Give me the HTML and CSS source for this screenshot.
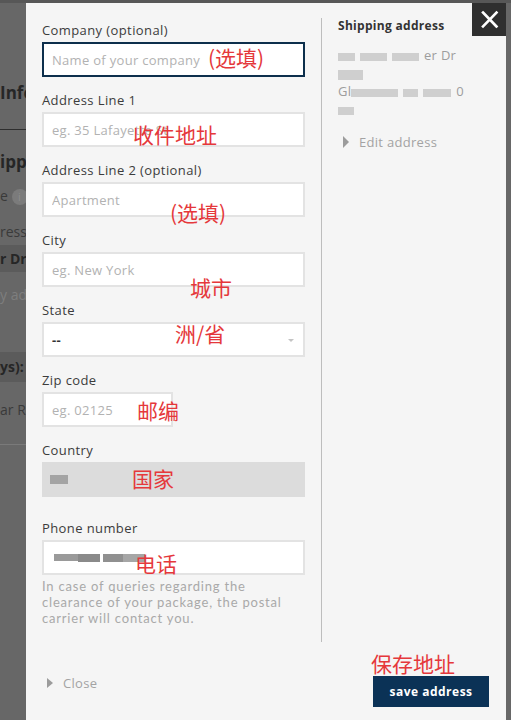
FILE: index.html
```html
<!DOCTYPE html>
<html lang="en">

<head>
  <meta charset="UTF-8">
  <meta name="viewport" content="width=device-width, initial-scale=1.0">
  <title>Edit shipping address</title>
  <link rel="stylesheet" href="styles.css">
</head>

<body>
  <!-- page behind the dialog -->
  <div class="page">
    <div class="page-top"></div>
    <div class="page-side">
      <div class="ps-title">Info</div>
      <div class="ps-rule"></div>
      <div class="ps-head">ipp</div>
      <div class="ps-note">e <span class="ps-info">i</span></div>
      <div class="ps-text">ress</div>
      <div class="ps-band">r Dr</div>
      <div class="ps-muted">y ad</div>
      <div class="ps-band ps-band-tall">ys):</div>
      <div class="ps-text ps-text-far">ar R.</div>
      <div class="ps-rule ps-rule-light"></div>
    </div>
  </div>

  <div class="modal">
    <button class="close-btn" aria-label="Close">
      <svg width="34" height="33" viewBox="0 0 34 33">
        <path d="M11 9.5 L24.5 23.5 M24.5 9.5 L11 23.5" stroke="#fff" stroke-width="2.6" stroke-linecap="square" />
      </svg>
    </button>

    <div class="modal-body">
      <form class="form-col">
        <div class="field">
          <label for="company">Company (optional)</label>
          <input id="company" class="input input-active" type="text" placeholder="Name of your company">
        </div>
        <div class="field">
          <label for="line1">Address Line 1</label>
          <input id="line1" class="input" type="text" placeholder="eg. 35 Lafayette St">
        </div>
        <div class="field">
          <label for="line2">Address Line 2 (optional)</label>
          <input id="line2" class="input" type="text" placeholder="Apartment">
        </div>
        <div class="field">
          <label for="city">City</label>
          <input id="city" class="input" type="text" placeholder="eg. New York">
        </div>
        <div class="field">
          <label for="state">State</label>
          <div class="select-wrap">
            <select id="state" class="select">
              <option>--</option>
            </select>
          </div>
        </div>
        <div class="field">
          <label for="zip">Zip code</label>
          <input id="zip" class="input input-zip" type="text" placeholder="eg. 02125">
        </div>
        <div class="field field-country">
          <label>Country</label>
          <div class="static-box"><span class="bit bit-country"></span></div>
        </div>
        <div class="field field-last">
          <label for="phone">Phone number</label>
          <div class="input phone-box">
            <span class="bit bit-phone-a"></span><span class="bit bit-phone-b"></span><span class="bit bit-phone-c"></span><span class="bit bit-phone-d"></span>
          </div>
          <p class="help">In case of queries regarding the<br>clearance of your package, the postal<br>carrier will contact you.</p>
        </div>
      </form>

      <div class="summary-col">
        <h3>Shipping address</h3>
        <div class="address">
          <div><span class="bit w17"></span><span class="bit w27"></span><span class="bit w27"></span>er Dr</div>
          <div><span class="bit w25 bit-tall"></span></div>
          <div>Gl<span class="bit w47"></span><span class="bit w15"></span><span class="bit w28"></span>0</div>
          <div><span class="bit w16"></span></div>
        </div>
        <a class="toggle edit-link">Edit address</a>
      </div>
    </div>

    <div class="modal-foot">
      <a class="toggle close-link">Close</a>
      <button class="save-btn">save address</button>
    </div>
  </div>

  <!-- red notes drawn over the screenshot -->
  <div class="notes">
    <span class="note note-company">(选填)</span>
    <span class="note note-line1">收件地址</span>
    <span class="note note-line2">(选填)</span>
    <span class="note note-city">城市</span>
    <span class="note note-state">洲/省</span>
    <span class="note note-zip">邮编</span>
    <span class="note note-country">国家</span>
    <span class="note note-phone">电话</span>
    <span class="note note-save">保存地址</span>
  </div>
</body>

</html>
```

FILE: styles.css
```css
body {
  margin: 0;
  width: 511px;
  height: 720px;
  overflow: hidden;
  position: relative;
  background: #676767;
  font-family: "Open Sans", "Liberation Sans", sans-serif;
}

/* background page, dimmed */
.page-top {
  height: 3px;
  background: #575757;
}

.page-side {
  width: 40px;
  overflow: hidden;
  white-space: nowrap;
  color: #262626;
  font-size: 14px;
}

.ps-title {
  margin-top: 78px;
  line-height: 24px;
  font-size: 17px;
  font-weight: bold;
}

.ps-rule {
  margin-top: 24px;
  height: 1px;
  background: #2e2e2e;
}

.ps-rule-light {
  background: #7a7a7a;
}

.ps-head {
  margin-top: 20px;
  line-height: 24px;
  font-size: 17px;
  font-weight: bold;
}

.ps-note {
  margin-top: 12px;
  line-height: 20px;
  color: #3a3a3a;
}

.ps-info {
  display: inline-block;
  width: 16px;
  height: 16px;
  border-radius: 50%;
  background: #7b7b7b;
  color: #8d8d8d;
  font-size: 11px;
  line-height: 16px;
  text-align: center;
  vertical-align: middle;
}

.ps-text {
  margin-top: 16px;
  line-height: 20px;
  color: #3a3a3a;
}

.ps-text-far {
  margin-top: 18px;
}

.ps-band {
  margin-top: 3px;
  height: 27px;
  line-height: 27px;
  background: #5b5b5b;
  font-weight: bold;
}

.ps-band-tall {
  margin-top: 47px;
  height: 30px;
  line-height: 30px;
}

.ps-muted {
  margin-top: 13px;
  line-height: 20px;
  color: #7e7e7e;
}

/* dialog */
.modal {
  position: absolute;
  left: 26px;
  top: 3px;
  width: 480px;
  height: 717px;
  background: #f5f5f5;
}

.close-btn {
  position: absolute;
  top: 0;
  right: 0;
  width: 34px;
  height: 33px;
  padding: 0;
  border: none;
  background: #2f2f2f;
}

.close-btn svg {
  display: block;
}

.modal-body {
  display: flex;
  padding-top: 15px;
}

.form-col {
  width: 263px;
  margin: 0;
  padding: 4px 16px 16px 16px;
}

.field {
  margin-bottom: 15px;
}

.field-country {
  margin-bottom: 23px;
}

.field-last {
  margin-bottom: 0;
}

label {
  display: block;
  font-size: 13px;
  line-height: 16px;
  letter-spacing: 0.4px;
  margin-bottom: 4px;
  color: #3c3c3c;
}

.input,
.select {
  display: block;
  box-sizing: border-box;
  width: 100%;
  height: 35px;
  margin: 0;
  padding: 0 8px;
  border: 2px solid #e3e3e3;
  border-radius: 0;
  background: #fff;
  font-family: inherit;
  font-size: 13px;
  letter-spacing: 0.3px;
  color: #333;
  outline: none;
}

.input::placeholder {
  color: #b2b2b2;
}

.input-active {
  border-color: #0d2f4c;
}

.input-zip {
  width: 131px;
}

.select-wrap {
  position: relative;
}

.select {
  appearance: none;
  -webkit-appearance: none;
  font-weight: bold;
}

.select-wrap::after {
  content: "";
  position: absolute;
  right: 11px;
  top: 17px;
  border-left: 3px solid transparent;
  border-right: 3px solid transparent;
  border-top: 3px solid #c4c4c4;
}

.static-box {
  height: 35px;
  background: #dcdcdc;
  display: flex;
  align-items: center;
  padding-left: 8px;
}

.phone-box {
  display: flex;
  align-items: center;
  padding-left: 10px;
}

.help {
  margin: 3px 0 0;
  font-family: Lato, "Open Sans", sans-serif;
  font-size: 13px;
  line-height: 16px;
  letter-spacing: 0.8px;
  color: #a9a9a9;
}

/* blurred personal details */
.bit {
  display: inline-block;
  height: 8px;
  margin-right: 5px;
  background: #cfcfcf;
  filter: blur(0.7px);
  vertical-align: middle;
}

.bit-tall {
  height: 10px;
}

.w15 { width: 15px; }
.w16 { width: 16px; }
.w17 { width: 17px; }
.w25 { width: 25px; }
.w27 { width: 27px; }
.w28 { width: 28px; }
.w47 { width: 47px; }

.bit-country {
  width: 18px;
  height: 9px;
  background: #a4a4a4;
}

.bit-phone-a {
  width: 24px;
  height: 7px;
  margin-right: 0;
  background: #9a9a9a;
}

.bit-phone-b {
  width: 22px;
  height: 8px;
  margin-right: 3px;
  background: #8a8a8a;
}

.bit-phone-c {
  width: 20px;
  height: 8px;
  margin-right: 0;
  background: #909090;
}

.bit-phone-d {
  width: 22px;
  height: 8px;
  margin-right: 0;
  background: #a6a6a6;
}

.summary-col {
  flex: 1;
  border-left: 1px solid #bdbdbd;
  padding-left: 16px;
}

.summary-col h3 {
  margin: 0;
  font-size: 12px;
  line-height: 16px;
  letter-spacing: 0.3px;
  color: #333;
}

.address {
  margin-top: 12px;
  font-size: 13px;
  line-height: 18px;
  letter-spacing: 0.3px;
  color: #9d9d9d;
}

.toggle {
  display: flex;
  align-items: center;
  font-size: 13px;
  letter-spacing: 0.3px;
  color: #a3a3a3;
}

.toggle::before {
  content: "";
  border-left: 6px solid #9c9c9c;
  border-top: 6px solid transparent;
  border-bottom: 6px solid transparent;
  margin-right: 10px;
}

.edit-link {
  margin-top: 14px;
  line-height: 20px;
  padding-left: 5px;
}

.modal-foot {
  display: flex;
  justify-content: space-between;
  align-items: flex-start;
  padding: 34px 17px 0 21px;
}

.close-link {
  line-height: 14px;
}

.close-link::before {
  border-top-width: 5px;
  border-bottom-width: 5px;
}

.save-btn {
  width: 116px;
  height: 31px;
  border: none;
  background: #0b3256;
  color: #fff;
  font-family: inherit;
  font-size: 12px;
  font-weight: bold;
  letter-spacing: 0.5px;
}

/* annotations */
.note {
  position: absolute;
  font-family: "Noto Sans CJK SC", sans-serif;
  font-size: 21px;
  line-height: 21px;
  color: #e5383b;
  white-space: nowrap;
}

.note-company { left: 208px; top: 47px; }
.note-line1 { left: 133px; top: 124px; }
.note-line2 { left: 170px; top: 202px; }
.note-city { left: 190px; top: 277px; }
.note-state { left: 175px; top: 323px; }
.note-zip { left: 137px; top: 400px; }
.note-country { left: 132px; top: 468px; }
.note-phone { left: 135px; top: 553px; }
.note-save { left: 371px; top: 653px; }
```
